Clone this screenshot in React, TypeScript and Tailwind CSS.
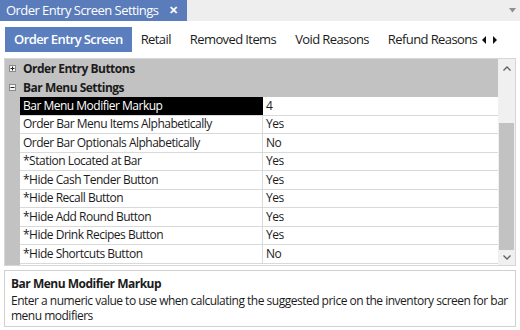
import React from 'react';

interface PropRow {
  name: string;
  value: string;
}

const rows: PropRow[] = [
  { name: 'Bar Menu Modifier Markup', value: '4' },
  { name: 'Order Bar Menu Items Alphabetically', value: 'Yes' },
  { name: 'Order Bar Optionals Alphabetically', value: 'No' },
  { name: '*Station Located at Bar', value: 'Yes' },
  { name: '*Hide Cash Tender Button', value: 'Yes' },
  { name: '*Hide Recall Button', value: 'Yes' },
  { name: '*Hide Add Round Button', value: 'Yes' },
  { name: '*Hide Drink Recipes Button', value: 'Yes' },
  { name: '*Hide Shortcuts Button', value: 'No' },
];

const tabs = ['Retail', 'Removed Items', 'Void Reasons', 'Refund Reasons'];

function ExpandBox({ open }: { open: boolean }) {
  return (
    <svg width="7" height="7" viewBox="0 0 7 7" className="shrink-0">
      <rect x="0.5" y="0.5" width="6" height="6" fill="#f6f6f6" stroke="#8a8a8a" />
      <line x1="1.5" y1="3.5" x2="5.5" y2="3.5" stroke="#222" />
      {!open && <line x1="3.5" y1="1.5" x2="3.5" y2="5.5" stroke="#222" />}
    </svg>
  );
}

export default function App() {
  const font = { fontFamily: '"Open Sans", "Noto Sans", sans-serif' };

  return (
    <div
      className="w-[520px] h-[330px] bg-white flex flex-col overflow-hidden text-[#1b1b1b] text-[12px] tracking-[-0.5px]"
      style={font}
    >
      {/* document tab strip */}
      <div className="h-[21px] bg-[#eeeeee] flex items-stretch shrink-0">
        <div className="w-[187px] bg-[#5a7cba] text-white flex items-center pl-[6px] text-[13px] tracking-[-0.55px]">
          <span>Order Entry Screen Settings</span>
          <span className="ml-[11px] text-[11px] font-semibold">✕</span>
        </div>
        <div className="flex-1" />
        <div className="w-[16px] flex items-center justify-center">
          <svg width="7" height="5" viewBox="0 0 7 5">
            <path d="M0 0 H7 L3.5 4.5 Z" fill="#8f8f8f" />
          </svg>
        </div>
      </div>

      {/* page tabs */}
      <div className="h-[37px] flex items-center pl-[5px] shrink-0 text-[13px] tracking-[-0.6px]">
        <div className="h-[25px] bg-[#5b7ebf] text-white font-semibold px-[9px] flex items-center">
          Order Entry Screen
        </div>
        <div className="flex items-center gap-[19px] ml-[9px]">
          {tabs.map((t) => (
            <span key={t}>{t}</span>
          ))}
        </div>
        <div className="flex items-center gap-[7px] ml-[5px]">
          <svg width="4" height="8" viewBox="0 0 4 8">
            <path d="M4 0 V8 L0 4 Z" fill="#111" />
          </svg>
          <svg width="4" height="8" viewBox="0 0 4 8">
            <path d="M0 0 V8 L4 4 Z" fill="#111" />
          </svg>
        </div>
      </div>

      {/* property grid */}
      <div className="mx-[4px] h-[208px] border border-[#d6d6d6] flex shrink-0">
        <div className="flex-1 flex flex-col">
          <div className="h-[19px] bg-[#c2c2c2] flex items-center pl-[4px] gap-[7px] font-bold">
            <ExpandBox open={false} />
            <span>Order Entry Buttons</span>
          </div>
          <div className="h-[19px] bg-[#c2c2c2] flex items-center pl-[4px] gap-[7px] font-bold">
            <ExpandBox open={true} />
            <span>Bar Menu Settings</span>
          </div>
          <div className="flex-1 flex">
            <div className="w-[15px] bg-[#c2c2c2]" />
            <div className="flex-1 flex flex-col">
              {rows.map((r, i) => (
                <div key={r.name} className="h-[18.5px] flex border-b border-[#d9d9d9]">
                  <div
                    className={
                      i === 0
                        ? 'w-[243px] bg-black text-white pl-[3px] flex items-center border-r border-black'
                        : 'w-[243px] bg-white pl-[3px] flex items-center border-r border-[#d9d9d9]'
                    }
                  >
                    {r.name}
                  </div>
                  <div className="flex-1 bg-white pl-[3px] flex items-center">{r.value}</div>
                </div>
              ))}
            </div>
          </div>
        </div>
        {/* scrollbar */}
        <div className="w-[17px] bg-[#f0f0f0] flex flex-col items-center">
          <div className="h-[18px] flex items-center justify-center">
            <svg width="8" height="5" viewBox="0 0 8 5">
              <path d="M0.5 4.5 L4 1 L7.5 4.5" fill="none" stroke="#606060" strokeWidth="1.3" />
            </svg>
          </div>
          <div className="h-[46px]" />
          <div className="w-[15px] h-[127px] bg-[#c2c2c2]" />
          <div className="flex-1 flex items-center justify-center">
            <svg width="8" height="5" viewBox="0 0 8 5">
              <path d="M0.5 0.5 L4 4 L7.5 0.5" fill="none" stroke="#606060" strokeWidth="1.3" />
            </svg>
          </div>
        </div>
      </div>

      {/* description */}
      <div className="mx-[4px] mt-[4px] h-[57px] border border-[#d0d0d0] pl-[6px] pr-[2px] pt-[4px] leading-[15px]">
        <div className="font-bold leading-[17px]">Bar Menu Modifier Markup</div>
        <div className="mt-[1px]">
          Enter a numeric value to use when calculating the suggested price on the inventory screen for bar menu
          modifiers
        </div>
      </div>
    </div>
  );
}
